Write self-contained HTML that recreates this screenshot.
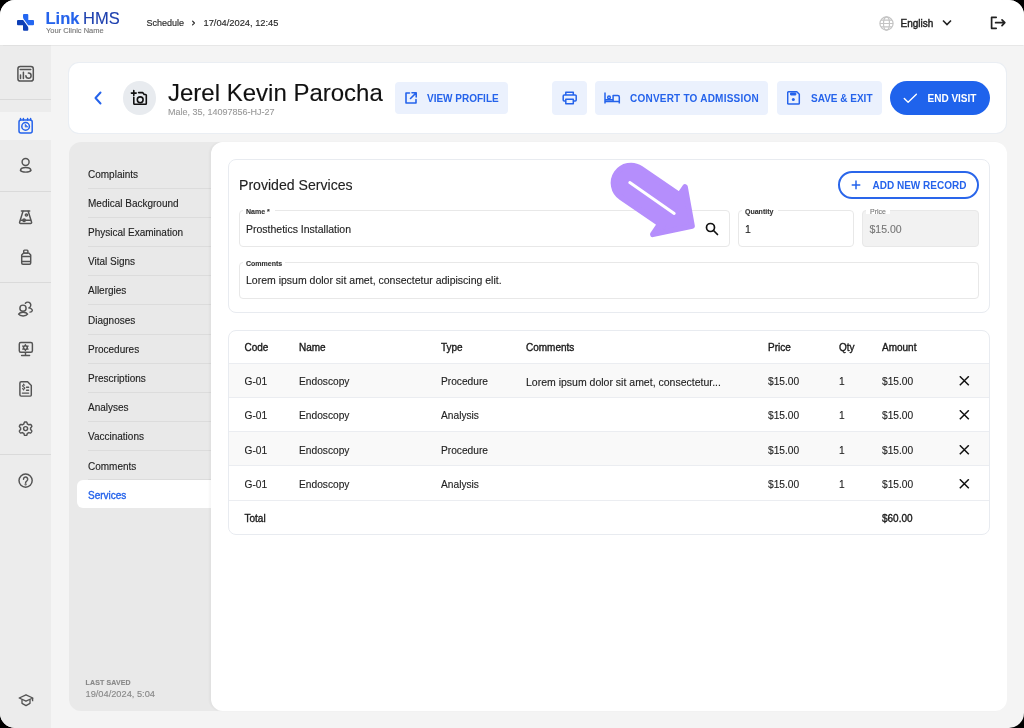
<!DOCTYPE html>
<html><head><meta charset="utf-8">
<style>
*{box-sizing:border-box;margin:0;padding:0}
html,body{width:1024px;height:728px;overflow:hidden;background:#000}
body{font-family:"Liberation Sans",sans-serif;color:#222}
#scr{will-change:transform;position:absolute;left:0;top:0;width:1024px;height:728px;border-radius:15px;overflow:hidden;background:#f4f4f4}
.abs{position:absolute}
#hdr{left:0;top:0;width:1024px;height:45px;background:#fff;box-shadow:0 0.5px 1px rgba(0,0,0,0.05);z-index:2}
#side{left:0;top:45px;width:51px;height:683px;background:#ececec}
.sdiv{position:absolute;left:0;width:51px;height:1px;background:#dadada}
.ic{position:absolute;left:17px;width:17px;height:17px}
.t{position:absolute;white-space:nowrap;line-height:1;-webkit-text-stroke:0.12px currentColor}
#pcard{left:69px;top:63px;width:937px;height:70px;background:#fff;border-radius:10px;box-shadow:0 0 0 1px #eaeef3}
#nav{left:69px;top:142px;width:160px;height:569px;background:#e9e9e9;border-radius:12px}
#cont{left:211px;top:142px;width:796px;height:569px;background:#fff;border-radius:12px;box-shadow:-1.5px 0 2px rgba(0,0,0,0.035)}
.nitem{position:absolute;left:19px;font-size:10px;color:#222}
.ndiv{position:absolute;left:19px;width:123px;height:1px;background:#dcdcdc}
.btn{position:absolute;top:81px;height:34px;background:#ebf1fd;border-radius:4px}
.th{font-size:10px;color:#1a1a1a;-webkit-text-stroke:0.35px #1a1a1a}
.td{font-size:10.2px;color:#222}
.btxt{position:absolute;font-size:10px;font-weight:bold;color:#2563eb;letter-spacing:0;white-space:nowrap;line-height:1}
</style></head><body>
<div id="scr">
  <!-- header -->
  <div id="hdr" class="abs">
    <svg class="abs" style="left:17px;top:14px" width="17" height="17" viewBox="0 0 17 17">
      <path d="M6 1a1 1 0 0 1 1-1H10.3a1 1 0 0 1 1 1V6H16a1 1 0 0 1 1 1V10.3a1 1 0 0 1-1 1H11.17L6.6 4.9C6.2 4.3 6 3.6 6 2.8z" fill="#2467f1"/>
      <path d="M1 6H6.15L10.8 12.5C11.1 13 11.3 13.6 11.3 14.3V15.7a1 1 0 0 1-1 1H7a1 1 0 0 1-1-1V11.3H1a1 1 0 0 1-1-1V7a1 1 0 0 1 1-1z" fill="#0c3eb6"/>
    </svg>
    <div class="t" style="left:45.5px;top:10px;font-size:16.5px;font-weight:bold;color:#2563eb">Link</div>
    <div class="t" style="left:83px;top:10px;font-size:16.5px;color:#1e40af">HMS</div>
    <div class="t" style="left:46px;top:27px;font-size:7.5px;color:#777">Your Clinic Name</div>
    <div class="t" style="left:146.5px;top:18.6px;font-size:9px;color:#2a2a2a;-webkit-text-stroke:0.15px #2a2a2a">Schedule</div>
    <svg class="abs" style="left:190px;top:19px" width="8" height="8" viewBox="0 0 8 8" fill="none" stroke="#2a2a2a" stroke-width="1.2" stroke-linecap="round" stroke-linejoin="round"><path d="M2.6 2.2L4.4 4 2.6 5.8"/></svg>
    <div class="t" style="left:203.5px;top:18.6px;font-size:9.3px;color:#2a2a2a;-webkit-text-stroke:0.15px #2a2a2a">17/04/2024, 12:45</div>
    <svg class="abs" style="left:878.5px;top:15.5px" width="15" height="15" viewBox="0 0 15 15" fill="none" stroke="#c4c4c4" stroke-width="1.2">
      <circle cx="7.5" cy="7.5" r="6.6"/><ellipse cx="7.5" cy="7.5" rx="3" ry="6.6"/><path d="M1 7.5h13M2 4.2h11M2 10.8h11"/>
    </svg>
    <div class="t" style="left:900.5px;top:19px;font-size:10px;color:#222;-webkit-text-stroke:0.4px #222">English</div>
    <svg class="abs" style="left:942px;top:19px" width="10" height="8" viewBox="0 0 10 8" fill="none" stroke="#222" stroke-width="1.6"><path d="M1 1.5l4 4 4-4"/></svg>
    <svg class="abs" style="left:990px;top:16px" width="16" height="14" viewBox="0 0 16 14" fill="none" stroke="#222" stroke-width="1.7" stroke-linecap="round" stroke-linejoin="round"><path d="M6.2 1.3H1.6v11h4.6M5.6 6.7h9M12 3.8l2.8 2.9-2.8 2.9"/></svg>
  </div>

  <!-- sidebar -->
  <div id="side" class="abs">
    <div class="sdiv" style="top:54px"></div>
    <div class="sdiv" style="top:146px"></div>
    <div class="sdiv" style="top:237px"></div>
    <div class="sdiv" style="top:409px"></div>
    <div class="abs" style="left:0;top:67px;width:51px;height:28px;background:#f4f4f4"></div>
  </div>
  <svg class="abs" style="left:10px;top:60px" width="32" height="32" viewBox="0 0 32 32" fill="none" stroke="#545454" stroke-width="1.5" stroke-linecap="round">
    <rect x="7.9" y="6.6" width="15.4" height="14.5" rx="2.4"/><path d="M10.2 9.5h10.6M10.5 15v3.5M13.4 12.2v6.3M18.4 13.1A2.6 2.6 0 1 1 15.9 15.8"/>
  </svg>
  <svg class="abs" style="left:10px;top:110px" width="32" height="32" viewBox="0 0 32 32" fill="none" stroke="#2563eb" stroke-width="1.5" stroke-linecap="round">
    <rect x="9" y="10.1" width="13.2" height="12.9" rx="2"/><path d="M10.5 8.5v1.5M13.4 8.5v1.5M17.6 8.5v1.5M20.6 8.5v1.5"/><circle cx="15.6" cy="16.4" r="3.8"/><path d="M15.2 16.7V14.2L17.7 16.7z" fill="#2563eb" stroke-width="0.6" stroke-linejoin="round"/>
  </svg>
  <svg class="abs" style="left:10px;top:150px" width="32" height="32" viewBox="0 0 32 32" fill="none" stroke="#545454" stroke-width="1.45">
    <circle cx="15.6" cy="11.9" r="3.5"/><path d="M10.4 20.3C11.3 16.6 20.1 16.6 21 20.3C19.6 22.7 11.8 22.7 10.4 20.3z" stroke-linejoin="round"/>
  </svg>
  <svg class="abs" style="left:10px;top:201px" width="32" height="32" viewBox="0 0 32 32" fill="none" stroke="#545454" stroke-width="1.45" stroke-linejoin="round" stroke-linecap="round">
    <path d="M11.4 9.9h8.3"/><path d="M13 10.2L9.6 21.2a1 1 0 0 0 1 1.3h10a1 1 0 0 0 1-1.3L18.2 10.2"/><path d="M10.8 19.2h9.8"/><circle cx="14.1" cy="19.2" r="1.2"/><circle cx="16.4" cy="14" r="1.1"/>
  </svg>
  <svg class="abs" style="left:10px;top:241px" width="32" height="32" viewBox="0 0 32 32" fill="none" stroke="#545454" stroke-width="1.45" stroke-linejoin="round">
    <rect x="13.7" y="9.1" width="4.2" height="3" rx="0.8"/><path d="M13.6 12.1L11.7 14v8a1.2 1.2 0 0 0 1.2 1.2h6.6a1.2 1.2 0 0 0 1.2-1.2V14l-1.9-1.9z"/><path d="M11.7 15.4h8.9M11.7 20.4h8.9"/>
  </svg>
  <svg class="abs" style="left:10px;top:293px" width="32" height="32" viewBox="0 0 32 32" fill="none" stroke="#545454" stroke-width="1.45" stroke-linecap="round">
    <circle cx="13" cy="15.2" r="3.1"/><path d="M8.6 21.1C10.1 18.6 16.1 18.6 17.6 21.1C16.1 23.5 10.1 23.5 8.6 21.1z" stroke-linejoin="round"/><path d="M15.4 10.3A3 3 0 1 1 18.9 14.9M18.9 14.9C21 15.2 22.6 16.6 22.3 17.6C22 18.6 21 19 20 19.1"/>
  </svg>
  <svg class="abs" style="left:10px;top:333px" width="32" height="32" viewBox="0 0 32 32" fill="none" stroke="#545454" stroke-width="1.45" stroke-linecap="round">
    <rect x="9.3" y="9.5" width="13.1" height="9.8" rx="1.5"/><path d="M15.5 19.8v2.5M11.6 22.4h8"/><circle cx="15.4" cy="14.6" r="1.9"/>
    <path d="M15.4 11.6v1M15.4 16.6v1M12.8 13.1l.9.5M17.1 15.6l.9.5M12.8 16.1l.9-.5M17.1 13.6l.9-.5"/>
  </svg>
  <svg class="abs" style="left:10px;top:373px" width="32" height="32" viewBox="0 0 32 32" fill="none" stroke="#545454" stroke-width="1.45" stroke-linecap="round" stroke-linejoin="round">
    <path d="M11.2 8.8h6.4l3.7 3.7v9.6a1 1 0 0 1-1 1H11.2a1.3 1.3 0 0 1-1.3-1.3V10.1a1.3 1.3 0 0 1 1.3-1.3z"/><path d="M12.4 20.1h6.2M16.6 14.3h2M16.6 17.2h2"/>
    <path d="M14.6 12.2c-.6-.5-2-.4-2 .6 0 1.3 2.2.9 2.2 2.3 0 1-1.5 1.2-2.3.6M13.6 11v.7M13.6 16.2v.7" stroke-width="1.1"/>
  </svg>
  <svg class="abs" style="left:10px;top:413px" width="32" height="32" viewBox="0 0 32 32" fill="none" stroke="#545454" stroke-width="1.45" stroke-linejoin="round">
    <path d="M20.60 15.70L20.59 15.96L20.57 16.22L20.54 16.48L20.89 16.82L21.25 17.21L21.59 17.65L21.85 18.10L21.72 18.43L21.57 18.74L21.40 19.05L21.22 19.35L21.02 19.64L20.81 19.92L20.28 19.91L19.74 19.84L19.22 19.72L18.75 19.59L18.54 19.75L18.32 19.89L18.10 20.03L17.87 20.16L17.63 20.27L17.39 20.37L17.27 20.84L17.11 21.35L16.91 21.86L16.65 22.32L16.30 22.36L15.95 22.39L15.60 22.40L15.25 22.39L14.90 22.36L14.55 22.32L14.29 21.86L14.09 21.35L13.93 20.84L13.81 20.37L13.57 20.27L13.33 20.16L13.10 20.03L12.88 19.89L12.66 19.75L12.45 19.59L11.98 19.72L11.46 19.84L10.92 19.91L10.39 19.92L10.18 19.64L9.98 19.35L9.80 19.05L9.63 18.74L9.48 18.43L9.35 18.10L9.61 17.65L9.95 17.21L10.31 16.82L10.66 16.48L10.63 16.22L10.61 15.96L10.60 15.70L10.61 15.44L10.63 15.18L10.66 14.92L10.31 14.58L9.95 14.19L9.61 13.75L9.35 13.30L9.48 12.97L9.63 12.66L9.80 12.35L9.98 12.05L10.18 11.76L10.39 11.48L10.92 11.49L11.46 11.56L11.98 11.68L12.45 11.81L12.66 11.65L12.88 11.51L13.10 11.37L13.33 11.24L13.57 11.13L13.81 11.03L13.93 10.56L14.09 10.05L14.29 9.54L14.55 9.08L14.90 9.04L15.25 9.01L15.60 9.00L15.95 9.01L16.30 9.04L16.65 9.08L16.91 9.54L17.11 10.05L17.27 10.56L17.39 11.03L17.63 11.13L17.87 11.24L18.10 11.37L18.32 11.51L18.54 11.65L18.75 11.81L19.22 11.68L19.74 11.56L20.28 11.49L20.81 11.48L21.02 11.76L21.22 12.05L21.40 12.35L21.57 12.66L21.72 12.97L21.85 13.30L21.59 13.75L21.25 14.19L20.89 14.58L20.54 14.92L20.57 15.18L20.59 15.44z"/>
    <circle cx="15.6" cy="15.6" r="2"/>
  </svg>
  <svg class="abs" style="left:10px;top:465px" width="32" height="32" viewBox="0 0 32 32" fill="none" stroke="#545454" stroke-width="1.45" stroke-linecap="round">
    <circle cx="15.6" cy="15.6" r="6.6"/><path d="M13.5 14.2a2.1 2.1 0 1 1 3.4 1.6c-.9.6-1.3 1.1-1.3 2"/><circle cx="15.6" cy="19.4" r="0.35" fill="#585858"/>
  </svg>
  <svg class="abs" style="left:18px;top:693px" width="16" height="15" viewBox="0 0 16 15" fill="none" stroke="#545454" stroke-width="1.35" stroke-linejoin="round">
    <path d="M8 1.8L1.2 5 8 8.2 14.8 5z"/><path d="M4 6.5v3.8L8 12.6l4-2.3V6.5"/><path d="M14.6 5v3.2"/>
  </svg>


  <!-- patient card -->
  <div id="pcard" class="abs"></div>
  <svg class="abs" style="left:92px;top:90px" width="12" height="16" viewBox="0 0 12 16" fill="none" stroke="#2563eb" stroke-width="2" stroke-linecap="round" stroke-linejoin="round"><path d="M8.5 2.5L3.5 8l5 5.5"/></svg>
  <div class="abs" style="left:122.5px;top:81.2px;width:33.6px;height:33.6px;border-radius:50%;background:#e8ebef"></div>
  <svg class="abs" style="left:130px;top:89px" width="19" height="19" viewBox="0 0 19 19" fill="none" stroke="#111" stroke-width="1.6" stroke-linecap="round" stroke-linejoin="round">
    <path d="M1.4 4.1h4.8M3.8 1.6v4.9"/><path d="M8.6 3.6H12.6L14.2 5.5H15.5a.8.8 0 0 1 .8.8V14.5a.8.8 0 0 1-.8.8H4.6a.8.8 0 0 1-.8-.8V8.2"/><circle cx="10.2" cy="10.8" r="2.9"/>
  </svg>
  <div class="t" style="left:168px;top:81px;font-size:24px;color:#111">Jerel Kevin Parocha</div>
  <div class="t" style="left:168px;top:107.7px;font-size:9px;color:#999">Male, 35, 14097856-HJ-27</div>

  <div class="btn" style="left:395px;top:82px;width:113px;height:32px"></div>
  <svg class="abs" style="left:404px;top:91px" width="14" height="14" viewBox="0 0 14 14" fill="none" stroke="#2563eb" stroke-width="1.6" stroke-linecap="round" stroke-linejoin="round"><path d="M5.5 2H2v10h10V8.5M8 1.8h4.2V6M12 2L6.5 7.5"/></svg>
  <div class="btxt" style="left:427px;top:94px">VIEW PROFILE</div>

  <div class="btn" style="left:552px;width:35px"></div>
  <svg class="abs" style="left:560px;top:89px" width="20" height="18" viewBox="0 0 20 18" fill="none" stroke="#2563eb" stroke-width="1.5" stroke-linejoin="round"><path d="M5.8 6V3.2h7.5V6M5.6 12H4.2a1 1 0 0 1-1-1V7a1 1 0 0 1 1-1h11a1 1 0 0 1 1 1v4a1 1 0 0 1-1 1h-1.7"/><rect x="5.8" y="10.2" width="7.5" height="4.6"/></svg>

  <div class="btn" style="left:595px;width:173px"></div>
  <svg class="abs" style="left:603px;top:91px" width="18" height="14" viewBox="0 0 18 14" fill="none" stroke="#2563eb" stroke-width="1.5" stroke-linejoin="round"><path d="M2 1.6v11M2 10.4h14.3M16.3 12.6V6a1.5 1.5 0 0 0-1.5-1.5H10.1V10.4M2 8.7h8.1"/><circle cx="6" cy="6.4" r="1.3"/></svg>
  <div class="btxt" style="left:630px;top:94px;letter-spacing:0.22px">CONVERT TO ADMISSION</div>

  <div class="btn" style="left:777px;width:105px"></div>
  <svg class="abs" style="left:786.8px;top:91px" width="14" height="14" viewBox="0 0 14 14" fill="none" stroke="#2563eb" stroke-width="1.5" stroke-linejoin="round"><path d="M1.5 0.8h8.3l2.5 2.5v8.9a.8.8 0 0 1-.8.8H1.5a.8.8 0 0 1-.8-.8V1.6a.8.8 0 0 1 .8-.8z"/><rect x="3.6" y="2" width="5.2" height="2" fill="#2563eb" stroke-width="1"/><circle cx="6.3" cy="8.6" r="1.5" fill="#2563eb" stroke="none"/></svg>
  <div class="btxt" style="left:811px;top:94px">SAVE &amp; EXIT</div>

  <div class="abs" style="left:890px;top:81px;width:100px;height:34px;border-radius:17px;background:#1f63ec"></div>
  <svg class="abs" style="left:903px;top:92px" width="14" height="12" viewBox="0 0 14 12" fill="none" stroke="#fff" stroke-width="1.4" stroke-linecap="round" stroke-linejoin="round"><path d="M1.3 6.6L5.1 10.2L13.4 2.2"/></svg>
  <div class="btxt" style="left:927.5px;top:94px;color:#fff">END VISIT</div>

  <!-- nav -->
  <div id="nav" class="abs"></div>
  <div class="t nitem" style="left:88px;top:169.7px">Complaints</div>
  <div class="ndiv" style="left:88px;top:188px"></div>
  <div class="t nitem" style="left:88px;top:198.9px">Medical Background</div>
  <div class="ndiv" style="left:88px;top:217px"></div>
  <div class="t nitem" style="left:88px;top:228.1px">Physical Examination</div>
  <div class="ndiv" style="left:88px;top:246px"></div>
  <div class="t nitem" style="left:88px;top:257.2px">Vital Signs</div>
  <div class="ndiv" style="left:88px;top:275px"></div>
  <div class="t nitem" style="left:88px;top:286.4px">Allergies</div>
  <div class="ndiv" style="left:88px;top:304px"></div>
  <div class="t nitem" style="left:88px;top:315.6px">Diagnoses</div>
  <div class="ndiv" style="left:88px;top:334px"></div>
  <div class="t nitem" style="left:88px;top:344.8px">Procedures</div>
  <div class="ndiv" style="left:88px;top:363px"></div>
  <div class="t nitem" style="left:88px;top:374.0px">Prescriptions</div>
  <div class="ndiv" style="left:88px;top:392px"></div>
  <div class="t nitem" style="left:88px;top:403.1px">Analyses</div>
  <div class="ndiv" style="left:88px;top:421px"></div>
  <div class="t nitem" style="left:88px;top:432.3px">Vaccinations</div>
  <div class="ndiv" style="left:88px;top:450px"></div>
  <div class="t nitem" style="left:88px;top:461.5px">Comments</div>
  <div class="ndiv" style="left:88px;top:479px"></div>
  <div class="abs" style="left:77px;top:480px;width:140px;height:28px;background:#fff;border-radius:6px 0 0 6px"></div>
  <div class="t nitem" style="left:88px;top:490.7px;color:#2563eb;-webkit-text-stroke:0.35px #2563eb">Services</div>
  <div class="t" style="left:85.5px;top:679px;font-size:7px;font-weight:bold;color:#888;letter-spacing:0.15px">LAST SAVED</div>
  <div class="t" style="left:85.5px;top:690px;font-size:9.25px;color:#888">19/04/2024, 5:04</div>
  <div id="cont" class="abs"></div>
  <!-- form section -->
  <div class="abs" style="left:228px;top:159px;width:762px;height:154px;border:1px solid #e8ebf0;border-radius:8px"></div>
  <div class="t" style="left:239px;top:178px;font-size:14.1px;color:#222">Provided Services</div>
  <div class="abs" style="left:838px;top:171px;width:141px;height:28px;border:2px solid #2a66ea;border-radius:14px"></div>
  <svg class="abs" style="left:850.7px;top:179.7px" width="10" height="10" viewBox="0 0 10 10" stroke="#2563eb" stroke-width="1.5"><path d="M5 0.6v8.6M0.7 4.9h8.6"/></svg>
  <div class="btxt" style="left:872.5px;top:180.5px">ADD NEW RECORD</div>

  <div class="abs" style="left:239px;top:210px;width:491px;height:37px;border:1px solid #e8e8e8;border-radius:4px"></div>
  <div class="abs" style="left:243px;top:206px;width:32px;height:8px;background:#fff"></div>
  <div class="t" style="left:246px;top:208px;font-size:7px;font-weight:bold;color:#333">Name *</div>
  <div class="t" style="left:246px;top:224px;font-size:10.5px;color:#222">Prosthetics Installation</div>
  <svg class="abs" style="left:705px;top:222px" width="14" height="14" viewBox="0 0 14 14" fill="none" stroke="#111" stroke-width="1.7" stroke-linecap="round"><circle cx="5.5" cy="5.5" r="4"/><path d="M8.5 8.5L12.5 12.5"/></svg>

  <div class="abs" style="left:738px;top:210px;width:116px;height:37px;border:1px solid #e8e8e8;border-radius:4px"></div>
  <div class="abs" style="left:742px;top:206px;width:36px;height:8px;background:#fff"></div>
  <div class="t" style="left:745px;top:208px;font-size:7px;font-weight:bold;color:#333">Quantity</div>
  <div class="t" style="left:745px;top:224px;font-size:10.5px;color:#222">1</div>

  <div class="abs" style="left:862px;top:210px;width:117px;height:37px;border:1px solid #e8e8e8;border-radius:4px;background:#f2f2f2"></div>
  <div class="abs" style="left:866px;top:206px;width:24px;height:8px;background:#fff"></div>
  <div class="t" style="left:870px;top:208px;font-size:7px;color:#777">Price</div>
  <div class="t" style="left:869.5px;top:224px;font-size:10.5px;color:#777">$15.00</div>

  <div class="abs" style="left:239px;top:262px;width:740px;height:37px;border:1px solid #e8e8e8;border-radius:4px"></div>
  <div class="abs" style="left:243px;top:258px;width:42px;height:8px;background:#fff"></div>
  <div class="t" style="left:246px;top:260px;font-size:7px;font-weight:bold;color:#333">Comments</div>
  <div class="t" style="left:246px;top:275px;font-size:10.5px;color:#222">Lorem ipsum dolor sit amet, consectetur adipiscing elit.</div>

  <!-- table -->
  <div class="abs" style="left:228px;top:330px;width:762px;height:205px;border:1px solid #e8ebf0;border-radius:8px;overflow:hidden;background:#fff">
    <div class="t th" style="left:15.5px;top:12.0px">Code</div>
    <div class="t th" style="left:70.0px;top:12.0px">Name</div>
    <div class="t th" style="left:212.0px;top:12.0px">Type</div>
    <div class="t th" style="left:297.0px;top:12.0px">Comments</div>
    <div class="t th" style="left:539.0px;top:12.0px">Price</div>
    <div class="t th" style="left:610.0px;top:12.0px">Qty</div>
    <div class="t th" style="left:653.0px;top:12.0px">Amount</div>
    <div class="abs" style="left:0;top:31.70px;width:762px;height:34.25px;background:#f9f9f9;border-top:1px solid #ebedf1"></div>
    <div class="t td" style="left:15.5px;top:46.0px">G-01</div>
    <div class="t td" style="left:70.0px;top:46.0px">Endoscopy</div>
    <div class="t td" style="left:212.0px;top:46.0px">Procedure</div>
    <div class="t td" style="left:297.0px;top:46.0px;font-size:10.5px">Lorem ipsum dolor sit amet, consectetur...</div>
    <div class="t td" style="left:539.0px;top:46.0px">$15.00</div>
    <div class="t td" style="left:610.0px;top:46.0px">1</div>
    <div class="t td" style="left:653.0px;top:46.0px">$15.00</div>
    <svg class="abs" style="left:730px;top:45.1px" width="11" height="10" viewBox="0 0 11 10" stroke="#111" stroke-width="1.5"><path d="M0.8 0.3l9 9M9.8 0.3l-9 9"/></svg>
    <div class="abs" style="left:0;top:65.95px;width:762px;height:34.25px;background:#fff;border-top:1px solid #ebedf1"></div>
    <div class="t td" style="left:15.5px;top:80.2px">G-01</div>
    <div class="t td" style="left:70.0px;top:80.2px">Endoscopy</div>
    <div class="t td" style="left:212.0px;top:80.2px">Analysis</div>
    <div class="t td" style="left:539.0px;top:80.2px">$15.00</div>
    <div class="t td" style="left:610.0px;top:80.2px">1</div>
    <div class="t td" style="left:653.0px;top:80.2px">$15.00</div>
    <svg class="abs" style="left:730px;top:79.3px" width="11" height="10" viewBox="0 0 11 10" stroke="#111" stroke-width="1.5"><path d="M0.8 0.3l9 9M9.8 0.3l-9 9"/></svg>
    <div class="abs" style="left:0;top:100.20px;width:762px;height:34.25px;background:#f9f9f9;border-top:1px solid #ebedf1"></div>
    <div class="t td" style="left:15.5px;top:114.5px">G-01</div>
    <div class="t td" style="left:70.0px;top:114.5px">Endoscopy</div>
    <div class="t td" style="left:212.0px;top:114.5px">Procedure</div>
    <div class="t td" style="left:539.0px;top:114.5px">$15.00</div>
    <div class="t td" style="left:610.0px;top:114.5px">1</div>
    <div class="t td" style="left:653.0px;top:114.5px">$15.00</div>
    <svg class="abs" style="left:730px;top:113.6px" width="11" height="10" viewBox="0 0 11 10" stroke="#111" stroke-width="1.5"><path d="M0.8 0.3l9 9M9.8 0.3l-9 9"/></svg>
    <div class="abs" style="left:0;top:134.45px;width:762px;height:34.25px;background:#fff;border-top:1px solid #ebedf1"></div>
    <div class="t td" style="left:15.5px;top:148.8px">G-01</div>
    <div class="t td" style="left:70.0px;top:148.8px">Endoscopy</div>
    <div class="t td" style="left:212.0px;top:148.8px">Analysis</div>
    <div class="t td" style="left:539.0px;top:148.8px">$15.00</div>
    <div class="t td" style="left:610.0px;top:148.8px">1</div>
    <div class="t td" style="left:653.0px;top:148.8px">$15.00</div>
    <svg class="abs" style="left:730px;top:147.8px" width="11" height="10" viewBox="0 0 11 10" stroke="#111" stroke-width="1.5"><path d="M0.8 0.3l9 9M9.8 0.3l-9 9"/></svg>
    <div class="abs" style="left:0;top:168.70px;width:762px;height:1px;background:#ebedf1"></div>
    <div class="t th" style="left:15.5px;top:183.0px">Total</div>
    <div class="t th" style="left:653.0px;top:183.0px">$60.00</div>
  </div>

  <!-- arrow -->
  <svg class="abs" style="left:600px;top:155px" width="110" height="90" viewBox="0 0 110 90">
    <path d="M40.9 13.5L82.2 41.7L62.4 70.7L21.1 42.5A17.55 17.55 0 0 1 40.9 13.5zM85.1 31.9L92.1 71.1L52.8 79.4z" fill="#b58efc" stroke="#b58efc" stroke-width="5.5" stroke-linejoin="round"/>
    <path d="M29.8 27.5L74.2 58.4" stroke="#fff" stroke-width="3" stroke-linecap="round"/>
  </svg>
</div>
</body></html>
